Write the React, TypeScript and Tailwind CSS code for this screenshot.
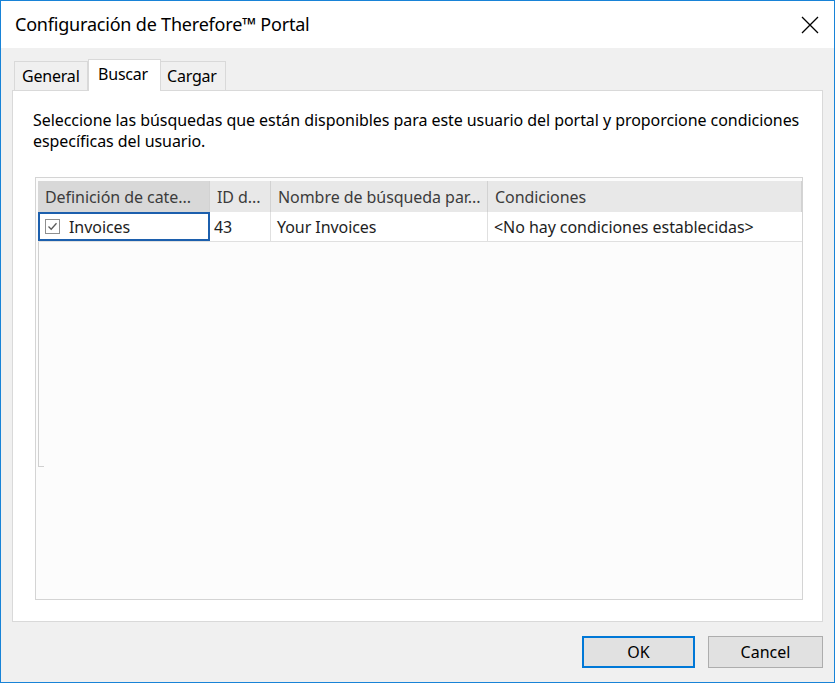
import React from "react";

const font = { fontFamily: '"Noto Sans", "Open Sans", sans-serif' };

function Checkbox() {
  return (
    <span className="w-[15px] h-[15px] border border-[#8f8f8f] bg-white flex items-center justify-center">
      <svg width="11" height="11" viewBox="0 0 11 11">
        <path d="M1.5 5.5 L4.2 8.2 L9.5 2.2" fill="none" stroke="#5a5a5a" strokeWidth="1.3" />
      </svg>
    </span>
  );
}

export default function App() {
  const cols = [
    { label: "Definición de cate...", w: "w-[172px]", active: true },
    { label: "ID d...", w: "w-[61px]" },
    { label: "Nombre de búsqueda par...", w: "w-[217px]" },
    { label: "Condiciones", w: "flex-1" },
  ];

  return (
    <div
      className="w-[835px] h-[683px] border border-[#1883d7] bg-[#f0f0f0] flex flex-col text-[#000] overflow-hidden"
      style={font}
    >
      {/* title bar */}
      <div className="h-[47px] bg-white flex items-center justify-between pl-[14px] pr-[15px] shrink-0">
        <span className="text-[18px] tracking-[-0.2px] -mt-[1px]">Configuración de Therefore™ Portal</span>
        <svg width="18" height="18" viewBox="0 0 18 18">
          <path d="M1 1 L17 17 M17 1 L1 17" stroke="#000" strokeWidth="1.3" />
        </svg>
      </div>

      <div className="flex flex-col px-[11px] pt-[11px]">
        {/* tabs */}
        <div className="flex items-end pl-[2px] h-[32px] text-[16px] tracking-[-0.2px] relative z-10">
          <div className="h-[29px] mb-[1px] px-[7px] border border-b-0 border-[#d9d9d9] bg-[#f0f0f0] flex items-center w-[74px]">
            General
          </div>
          <div className="h-[32px] px-[9px] border border-b-0 border-[#d9d9d9] bg-white flex items-center w-[73px] pb-[4px]">
            Buscar
          </div>
          <div className="h-[29px] mb-[1px] px-[6px] border border-b-0 border-l-0 border-[#d9d9d9] bg-[#f0f0f0] flex items-center w-[65px]">
            Cargar
          </div>
        </div>

        {/* panel */}
        <div className="h-[532px] -mt-[1px] border border-[#d9d9d9] bg-white flex flex-col pl-[22px] pr-[19px]">
          <p className="text-[16px] leading-[21px] tracking-[-0.06px] mt-[19px] -ml-[2px] text-[#000]">
            Seleccione las búsquedas que están disponibles para este usuario del portal y proporcione condiciones
            específicas del usuario.
          </p>

          {/* grid */}
          <div className="mt-[25px] h-[423px] border border-[#d4d4d4] bg-[#fcfcfc] flex flex-col pt-[3px] pl-[2px] text-[16px] tracking-[-0.06px]">
            <div className="flex h-[31px] bg-[#e8e8e8] text-[#3c3c3c]">
              {cols.map((c) => (
                <div
                  key={c.label}
                  className={`${c.w} shrink-0 px-[7px] flex items-center whitespace-nowrap overflow-hidden border-r border-[#d2d2d2] ${c.active ? "bg-[#d8d8d8]" : ""}`}
                >
                  {c.label}
                </div>
              ))}
            </div>
            <div className="flex h-[30px] border-b border-[#e0e0e0] text-[#1e1e1e] bg-white whitespace-nowrap">
              <div className="w-[172px] shrink-0 border-2 border-[#1c5fad] flex items-center gap-[9px] pl-[5px]">
                <Checkbox />
                <span>Invoices</span>
              </div>
              <div className="w-[61px] shrink-0 border-r border-[#e0e0e0] flex items-center px-[4px]">43</div>
              <div className="w-[217px] shrink-0 border-r border-[#e0e0e0] flex items-center px-[6px]">Your Invoices</div>
              <div className="flex-1 flex items-center px-[6px]">&lt;No hay condiciones establecidas&gt;</div>
            </div>
            <div className="w-[6px] h-[225px] border-l border-b border-[#d0d0d0]" />
          </div>
        </div>

        {/* buttons */}
        <div className="flex justify-end gap-[13px] mt-[14px] text-[16px]">
          <button className="w-[113px] h-[32px] border-2 border-[#0078d7] bg-[#e1e1e1] flex items-center justify-center">
            OK
          </button>
          <button className="w-[115px] h-[32px] border border-[#adadad] bg-[#e1e1e1] flex items-center justify-center">
            Cancel
          </button>
        </div>
      </div>
    </div>
  );
}
